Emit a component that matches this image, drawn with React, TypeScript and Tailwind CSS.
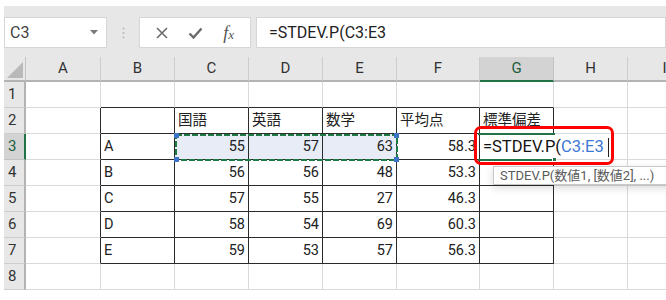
import React from "react";

const COLS = ["A", "B", "C", "D", "E", "F", "G", "H", "I"];

// sheet data, row number -> column letter -> value
const DATA: Record<number, Record<string, string>> = {
  2: { C: "国語", D: "英語", E: "数学", F: "平均点", G: "標準偏差" },
  3: { B: "A", C: "55", D: "57", E: "63", F: "58.3" },
  4: { B: "B", C: "56", D: "56", E: "48", F: "53.3" },
  5: { B: "C", C: "57", D: "55", E: "27", F: "46.3" },
  6: { B: "D", C: "58", D: "54", E: "69", F: "60.3" },
  7: { B: "E", C: "59", D: "53", E: "57", F: "56.3" },
};

const inTable = (c: string) => ["B", "C", "D", "E", "F", "G"].includes(c);

function Cell({ row, col }: { row: number; col: string }) {
  const value = DATA[row]?.[col] ?? "";
  const tableRow = row >= 2 && row <= 7;
  const darkRight = tableRow && (inTable(col) || col === "A");
  const darkBottom = (tableRow && inTable(col)) || (row === 1 && inTable(col));
  const selected = row === 3 && ["C", "D", "E"].includes(col);
  const numeric = /^[0-9.]+$/.test(value);

  return (
    <div
      className={[
        "border-r border-b flex items-center text-[14.5px] text-[#222] overflow-hidden whitespace-nowrap",
        darkRight ? "border-r-[#2b2b2b]" : "border-r-[#dadada]",
        darkBottom ? "border-b-[#2b2b2b]" : "border-b-[#dadada]",
        selected ? "bg-[#e7ecf7]" : "bg-white",
        numeric ? "justify-end pr-[3px]" : "justify-start pl-[3px]",
      ].join(" ")}
    >
      {value}
    </div>
  );
}

function Toolbar() {
  return (
    <div className="h-[51px] bg-[#e7e7e7] flex items-start pt-[11px]">
      <div className="w-[103px] h-[31px] bg-white border border-[#d6d6d6] flex items-center justify-between pl-[5px] pr-[8px]">
        <span className="text-[16px] text-[#444]">C3</span>
        <svg width="8" height="5" viewBox="0 0 8 5">
          <path d="M0 0 L8 0 L4 4.5 Z" fill="#7a7a7a" />
        </svg>
      </div>
      <div className="w-[32px] h-[31px] flex items-center justify-center">
        <svg width="3" height="12" viewBox="0 0 3 12">
          <circle cx="1.5" cy="1.5" r="1" fill="#b8b8b8" />
          <circle cx="1.5" cy="6" r="1" fill="#b8b8b8" />
          <circle cx="1.5" cy="10.5" r="1" fill="#b8b8b8" />
        </svg>
      </div>
      <div className="w-[112px] h-[31px] bg-white border border-[#d6d6d6] flex items-center justify-around px-[6px]">
        <svg width="12" height="12" viewBox="0 0 12 12">
          <path d="M1 1 L11 11 M11 1 L1 11" stroke="#6b6b6b" strokeWidth="1.6" />
        </svg>
        <svg width="15" height="12" viewBox="0 0 15 12">
          <path d="M1.5 6.5 L5.5 10.5 L13.5 1.5" stroke="#6b6b6b" strokeWidth="2.4" fill="none" />
        </svg>
        <span className="text-[#555] italic text-[18px] leading-none font-['Liberation_Serif',serif]">
          f<span className="text-[13px]">x</span>
        </span>
      </div>
      <div className="flex-1 ml-[5px] h-[31px] bg-white border border-[#d6d6d6] flex items-center pl-[12px] text-[16px] text-[#222]">
        =STDEV.P(C3:E3
      </div>
    </div>
  );
}

export default function App() {
  const rows = [1, 2, 3, 4, 5, 6, 7, 8];

  return (
    <div className="w-[666px] h-[300px] bg-white pt-[6px] pl-[4px] overflow-hidden font-['Roboto','Noto_Sans_CJK_JP',sans-serif]">
      <Toolbar />

      <div className="relative">
        <div className="grid grid-cols-[22px_75px_74px_74px_74px_74px_83px_74px_74px_74px] grid-rows-[25px_repeat(8,26px)]">
          {/* corner */}
          <div className="bg-[#e7e7e7] border-r border-b-2 border-r-[#c3c3c3] border-b-[#b3b3b3] flex items-end justify-end pr-[2px] pb-[2px]">
            <svg width="16" height="16" viewBox="0 0 16 16">
              <path d="M16 0 L16 16 L0 16 Z" fill="#b9b9b9" />
            </svg>
          </div>
          {COLS.map((c) => (
            <div
              key={c}
              className={
                c === "G"
                  ? "bg-[#d3d3d3] border-r border-r-[#c3c3c3] border-b-2 border-b-[#217346] flex items-center justify-center text-[15px] text-[#1d5e3a]"
                  : "bg-[#e7e7e7] border-r border-r-[#cdcdcd] border-b-2 border-b-[#b3b3b3] flex items-center justify-center text-[15px] text-[#333]"
              }
            >
              {c}
            </div>
          ))}

          {rows.map((r) => (
            <React.Fragment key={r}>
              <div
                className={
                  r === 3
                    ? "bg-[#d3d3d3] border-r-2 border-r-[#217346] border-b border-b-[#c3c3c3] flex items-center pl-[4px] text-[15px] text-[#1d5e3a]"
                    : "bg-[#e7e7e7] border-r-2 border-r-[#b3b3b3] border-b border-b-[#cdcdcd] flex items-center pl-[4px] text-[15px] text-[#333]"
                }
              >
                {r}
              </div>
              {COLS.map((c) => (
                <Cell key={c} row={r} col={c} />
              ))}
            </React.Fragment>
          ))}
        </div>

        {/* referenced range C3:E3 */}
        <svg className="absolute left-[170px] top-[76px]" width="225" height="29" viewBox="0 0 225 29">
          <rect x="2" y="2" width="221" height="25" fill="none" stroke="#1f7a45" strokeWidth="2" strokeDasharray="6 2" />
          <rect x="0" y="0" width="5" height="5" fill="#3c74c8" />
          <rect x="220" y="0" width="5" height="5" fill="#3c74c8" />
          <rect x="0" y="24" width="5" height="5" fill="#3c74c8" />
          <rect x="220" y="24" width="5" height="5" fill="#3c74c8" />
        </svg>

        {/* active cell G3 in edit mode */}
        <div className="absolute left-[474px] top-[76px] w-[77px] h-[2px] bg-[#217346]" />
        <div className="absolute left-[476px] top-[78px] w-[131px] h-[24px] bg-white flex items-center pl-[3px] text-[16.5px] text-[#111] whitespace-nowrap">
          =STDEV.P(<span className="text-[#3d78d4]">C3:E3</span>
          <span className="ml-[4px] w-[1px] h-[19px] bg-[#222]" />
        </div>
        <div className="absolute left-[474px] top-[102px] w-[77px] h-[2px] bg-[#217346]" />
        <div className="absolute left-[548px] top-[100px] w-[5px] h-[5px] bg-[#217346] border border-white" />

        {/* red highlight */}
        <div className="absolute left-[470px] top-[69px] w-[140px] h-[39px] border-[3px] border-[#f00] rounded-[7px]" />

        {/* function tooltip */}
        <div className="absolute left-[489px] top-[109px] w-[200px] h-[19px] bg-white border border-[#c9c9c9] shadow-[0_3px_8px_rgba(0,0,0,0.15)] flex items-center pl-[6px] text-[13px] text-[#5a5a5a] whitespace-nowrap">
          STDEV.P(数値1, [数値2], ...)
        </div>
      </div>
    </div>
  );
}
